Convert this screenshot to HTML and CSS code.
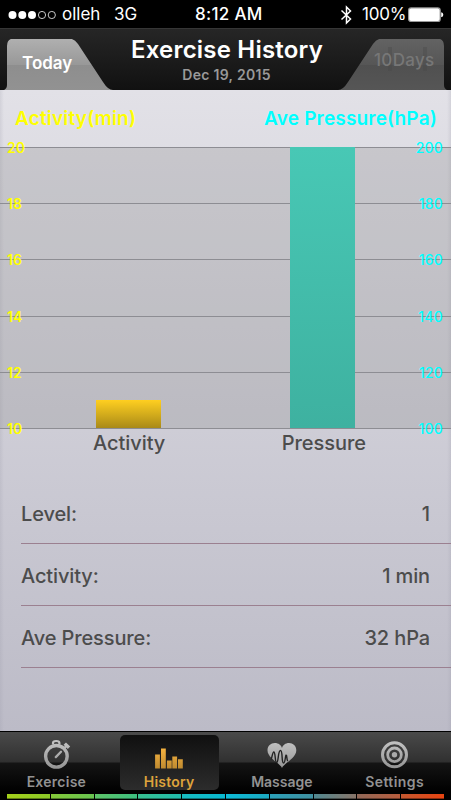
FILE: index.html
```html
<!DOCTYPE html>
<html lang="en">
<head>
    <meta charset="UTF-8">
    <meta name="viewport" content="width=device-width, initial-scale=1.0">
    <title>Exercise History</title>
    <link rel="stylesheet" href="styles.css">
</head>
<body>
    <div class="status-bar">
        <div class="status-left">
            <svg width="49" height="10" viewBox="0 0 49 10">
                <g fill="#fff">
                    <circle cx="4.5" cy="5" r="4"/>
                    <circle cx="14.3" cy="5" r="4"/>
                    <circle cx="24" cy="5" r="4"/>
                </g>
                <g fill="none" stroke="#ddd" stroke-width="0.9">
                    <circle cx="34" cy="5" r="3.6"/>
                    <circle cx="43.8" cy="5" r="3.6"/>
                </g>
            </svg>
            <span class="carrier">olleh</span>
            <span class="network">3G</span>
        </div>
        <div class="status-time">8:12 AM</div>
        <div class="status-right">
            <svg width="12" height="20" viewBox="0 0 12 20">
                <path d="M1.5 5.5 L10.5 14 L6.5 18 V2 L10.5 6 L1.5 14.5" fill="none" stroke="#fff" stroke-width="1.5"/>
            </svg>
            <span class="percent">100%</span>
            <svg width="36" height="16" viewBox="0 0 36 16">
                <rect x="0.6" y="0.9" width="31.6" height="13.6" rx="2.6" fill="#fff" stroke="#999" stroke-width="1.2"/>
                <path d="M33.2 5.3 Q35.3 5.6 35.3 7.8 Q35.3 10 33.2 10.3 Z" fill="#fff"/>
            </svg>
        </div>
    </div>

    <div class="header">
        <div class="tab tab-today">
            <svg class="tab-shape" width="113" height="52" viewBox="0 0 113 52">
                <defs>
                    <linearGradient id="todayFill" x1="0" y1="0" x2="0" y2="1">
                        <stop offset="0" stop-color="#b0b0b0"/>
                        <stop offset="0.5" stop-color="#989898"/>
                        <stop offset="0.51" stop-color="#8e8e8e"/>
                        <stop offset="1" stop-color="#929292"/>
                    </linearGradient>
                </defs>
                <path d="M1 52 Q7 51 7 46 V7 Q7 -0.5 14 -0.5 H69 Q74 -0.5 78 5 L103 43 Q108 51 113 51 V52 Z" fill="url(#todayFill)"/>
            </svg>
            <span class="tab-label">Today</span>
        </div>
        <div class="title-box">
            <h1 class="title">Exercise History</h1>
            <div class="date">Dec 19, 2015</div>
        </div>
        <div class="tab tab-days">
            <svg class="tab-shape" width="113" height="52" viewBox="0 0 113 52">
                <defs>
                    <linearGradient id="daysFill" x1="0" y1="0" x2="0" y2="1">
                        <stop offset="0" stop-color="#636363"/>
                        <stop offset="0.5" stop-color="#565656"/>
                        <stop offset="0.51" stop-color="#505050"/>
                        <stop offset="1" stop-color="#565656"/>
                    </linearGradient>
                </defs>
                <path d="M112 52 Q106 51 106 46 V7 Q106 -0.5 99 -0.5 H44 Q39 -0.5 35 5 L10 43 Q5 51 0 51 V52 Z" fill="url(#daysFill)"/>
                <path d="M50 8 h4 v24 h-4 z M85 8 h4 v24 h-4 z" fill="#484848" opacity="0.35"/>
            </svg>
            <span class="tab-label">10Days</span>
        </div>
    </div>

    <div class="content">
        <div class="axis-titles">
            <span class="axis-min">Activity(min)</span>
            <span class="axis-hpa">Ave Pressure(hPa)</span>
        </div>

        <div class="chart">
            <div class="grid-row"><span>20</span><span>200</span></div>
            <div class="grid-row"><span>18</span><span>180</span></div>
            <div class="grid-row"><span>16</span><span>160</span></div>
            <div class="grid-row"><span>14</span><span>140</span></div>
            <div class="grid-row"><span>12</span><span>120</span></div>
            <div class="grid-row last"><span>10</span><span>100</span></div>
            <div class="bars">
                <div class="bar bar-activity" style="height: 10%"></div>
                <div class="bar bar-pressure" style="height: 100%"></div>
            </div>
        </div>
        <div class="bar-names">
            <span class="name-activity">Activity</span>
            <span class="name-pressure">Pressure</span>
        </div>

        <div class="stats">
            <div class="stat"><span>Level:</span><span>1</span></div>
            <div class="stat"><span>Activity:</span><span>1 min</span></div>
            <div class="stat"><span>Ave Pressure:</span><span>32 hPa</span></div>
        </div>
    </div>

    <div class="bottom">
        <div class="menu">
            <a class="menu-item">
                <svg width="32" height="32" viewBox="0 0 32 32">
                    <defs>
                        <linearGradient id="grey" x1="0" y1="0" x2="0" y2="32" gradientUnits="userSpaceOnUse">
                            <stop offset="0" stop-color="#c8c8c8"/>
                            <stop offset="1" stop-color="#929292"/>
                        </linearGradient>
                    </defs>
                    <g fill="none" stroke="url(#grey)">
                        <circle cx="16.4" cy="18.3" r="10.8" stroke-width="3.4"/>
                        <path d="M13 6.5 V5 Q13 3 16.2 3 Q19.4 3 19.4 5 V6.5" stroke-width="2.2"/>
                        <path d="M15.8 19.1 L21 13.8" stroke-width="2.3" stroke-linecap="round"/>
                        <path d="M24.4 10 L26.4 8" stroke-width="2.4"/>
                        <path d="M24.8 5.6 L29 9.8" stroke-width="3.4"/>
                    </g>
                </svg>
                <span class="label-exercise">Exercise</span>
            </a>
            <a class="menu-item active">
                <svg width="32" height="32" viewBox="0 0 32 32">
                    <defs>
                        <linearGradient id="gold" x1="0" y1="11" x2="0" y2="31" gradientUnits="userSpaceOnUse">
                            <stop offset="0" stop-color="#f4b240"/>
                            <stop offset="1" stop-color="#bd892f"/>
                        </linearGradient>
                    </defs>
                    <path d="M2.1 16.5 h4.8 v14 h-4.8 z M8 10.5 h4.8 v20 h-4.8 z M13.9 22.5 h4.8 v8 h-4.8 z M19.3 18.5 h4.8 v12 h-4.8 z M25 21.2 h4.8 v9.3 h-4.8 z" fill="url(#gold)"/>
                </svg>
                <span class="label-history">History</span>
            </a>
            <a class="menu-item">
                <svg width="32" height="32" viewBox="0 0 32 32">
                    <path d="M16 30 C14.5 25.5 1.5 20.5 1.5 12.3 C1.5 8 4.8 5 8.8 5 C12.5 5 15.3 7.2 16 10 C16.7 7.2 19.5 5 23 5 C27 5 30.3 8 30.3 12.3 C30.3 20.5 17.5 25.5 16 30 Z" fill="url(#grey)"/>
                    <path d="M4.8 21 C5.8 22 6.3 14 7.8 14 C9.6 14 8.8 24.5 10.6 24.5 C12.7 24.5 11.8 12.5 14.5 12.5 C17 12.5 15.2 25 17.6 25 C19.5 25 19.2 15.5 20.5 17.5 C21 19 20.7 22 21.8 23" fill="none" stroke="#222" stroke-width="1.4"/>
                </svg>
                <span class="label-massage">Massage</span>
            </a>
            <a class="menu-item">
                <svg width="32" height="32" viewBox="0 0 32 32">
                    <g fill="none" stroke="url(#grey)">
                        <circle cx="15.5" cy="16.8" r="12" stroke-width="3"/>
                        <circle cx="15.5" cy="16.8" r="6.8" stroke-width="2.8"/>
                    </g>
                    <circle cx="15.5" cy="16.8" r="2.7" fill="#aaa"/>
                </svg>
                <span class="label-settings">Settings</span>
            </a>
        </div>
        <div class="level-strip">
            <i class="s1"></i><i class="s2"></i><i class="s3"></i><i class="s4"></i><i class="s5"></i>
            <i class="s6"></i><i class="s7"></i><i class="s8"></i><i class="s9"></i><i class="s10"></i>
        </div>
    </div>
</body>
</html>
```
FILE: styles.css
```css
* {
    margin: 0;
    padding: 0;
    box-sizing: border-box;
}

body {
    width: 451px;
    height: 800px;
    display: flex;
    flex-direction: column;
    overflow: hidden;
    background: #000;
    font-family: Inter, 'Liberation Sans', sans-serif;
    font-weight: 500;
}

svg {
    display: block;
    flex: none;
}

span {
    white-space: nowrap;
}

/* status bar */
.status-bar {
    height: 28px;
    display: grid;
    grid-template-columns: 195px 1fr 111px;
    align-items: center;
    color: #fff;
    font-size: 17px;
    font-weight: 400;
    line-height: 29px;
}

.status-left,
.status-right {
    display: flex;
    align-items: center;
}

.status-left {
    padding-left: 8px;
}

.carrier {
    margin-left: 5px;
    width: 52px;
}

.status-time {
    font-weight: 500;
    letter-spacing: 0.3px;
}

.status-right svg {
    margin-top: 1px;
}

.percent {
    width: 46px;
    margin-left: 10px;
    letter-spacing: -0.2px;
}

/* title and tabs */
.header {
    height: 62px;
    padding-top: 10px;
    display: grid;
    grid-template-columns: 113px 1fr 113px;
    background: linear-gradient(#262626, #111);
    border-top: 1px solid #363636;
}

.tab {
    position: relative;
    height: 51px;
    overflow: hidden;
}

.tab-shape {
    position: absolute;
    top: 0;
    left: 0;
}

.tab-label {
    position: relative;
    display: block;
    font-size: 17px;
    font-weight: 600;
    line-height: 22px;
    color: #fff;
    padding: 13px 0 0 22px;
}

.tab-days .tab-label {
    color: #777;
    padding: 10px 0 0 36px;
    font-weight: 500;
    letter-spacing: 0.3px;
}

.title-box {
    text-align: center;
    white-space: nowrap;
}

.title {
    color: #fff;
    font-size: 24px;
    font-weight: 600;
    line-height: 28px;
    letter-spacing: 0.2px;
    margin: -3px 0 0 3px;
}

.date {
    color: #999;
    font-size: 14px;
    font-weight: 600;
    letter-spacing: 0.3px;
    line-height: 18px;
    margin: 2px 0 0 2px;
}

/* content */
.content {
    height: 641px;
    background: linear-gradient(90deg, rgba(150, 150, 165, 0.2), transparent 4px, transparent 447px, rgba(150, 150, 165, 0.2)), linear-gradient(#e2e1e7, #bcbbc7);
}

.axis-titles {
    height: 57px;
    padding: 17px 14px 0 15px;
    display: flex;
    justify-content: space-between;
    font-size: 19px;
    line-height: 24px;
    font-weight: 600;
    letter-spacing: 0.18px;
}

.axis-min {
    color: #ff0;
}

.axis-hpa {
    color: #0ff;
}

.chart {
    position: relative;
    height: 281px;
    background: rgba(140, 140, 140, 0.28);
}

.grid-row {
    height: 56.2px;
    padding: 0 8px 0 7px;
    display: flex;
    justify-content: space-between;
    border-top: 1px solid #8d8d93;
    color: #ff0;
    font-size: 14px;
    font-weight: 600;
    line-height: 16px;
}

.grid-row.last {
    height: 1px;
}

.grid-row span {
    position: relative;
    top: -8px;
    z-index: 2;
}

.grid-row span:last-child {
    color: #0ff;
    font-weight: 500;
    letter-spacing: 0.2px;
}

.bars {
    position: absolute;
    top: 0;
    left: 96px;
    width: 259px;
    height: 281px;
    display: flex;
    justify-content: space-between;
    align-items: flex-end;
}

.bar {
    width: 65px;
}

.bar-activity {
    background: linear-gradient(#ffcf20, #a98a18);
}

.bar-pressure {
    background: linear-gradient(#48c8b5, #3eb1a0);
}

.bar-names {
    height: 54px;
    padding: 3px 85px 0 93px;
    display: flex;
    justify-content: space-between;
    color: #4c4c4c;
    font-size: 20px;
    line-height: 24px;
    letter-spacing: -0.05px;
}

.stats {
    padding-left: 21px;
}

.stat {
    height: 62px;
    padding: 3px 21px 0 0;
    display: flex;
    justify-content: space-between;
    align-items: center;
    border-bottom: 1px solid #9b8090;
    color: #4c4c4c;
    font-size: 20px;
    line-height: 24px;
    letter-spacing: -0.12px;
}

/* bottom menu */
.bottom {
    height: 69px;
    background: linear-gradient(#4a4a4a, #303030 30px, #141414 31px, #000 60px);
    border-top: 1px solid #000;
}

.menu {
    height: 62px;
    display: grid;
    grid-template-columns: repeat(4, 1fr);
    padding-top: 3px;
}

.menu-item {
    height: 55px;
    width: 99px;
    justify-self: center;
    display: flex;
    flex-direction: column;
    align-items: center;
    padding-top: 3px;
    border-radius: 5px;
    color: #929292;
    font-size: 14px;
    line-height: 18px;
    font-weight: 600;
}

.menu-item span {
    margin-top: 3px;
}

.label-exercise {
    letter-spacing: 0.25px;
}

.label-history {
    letter-spacing: 0.2px;
}

.label-settings {
    letter-spacing: 0.4px;
}

.menu-item.active {
    background: linear-gradient(#101010, #2c2c2c);
    color: #dda33c;
}

.level-strip {
    height: 5px;
    margin-left: 7px;
    width: 437px;
    display: grid;
    grid-template-columns: repeat(10, 1fr);
    gap: 1px;
    background: #000;
}

.level-strip i {
    box-shadow: inset 0 -1px rgba(0, 0, 0, 0.4);
}

.s1 { background: linear-gradient(90deg, #a4d01a, #8cc828); }
.s2 { background: linear-gradient(90deg, #84c838, #68c450); }
.s3 { background: linear-gradient(90deg, #5ec468, #3cbf80); }
.s4 { background: linear-gradient(90deg, #38c090, #20bcac); }
.s5 { background: linear-gradient(90deg, #18bcc0, #08b8d0); }
.s6 { background: linear-gradient(90deg, #0cbcd8, #1ca8c0); }
.s7 { background: linear-gradient(90deg, #2aa0b8, #4090a0); }
.s8 { background: linear-gradient(90deg, #508890, #887468); }
.s9 { background: linear-gradient(90deg, #906858, #b85c3c); }
.s10 { background: linear-gradient(90deg, #c45830, #e84410); }
```
